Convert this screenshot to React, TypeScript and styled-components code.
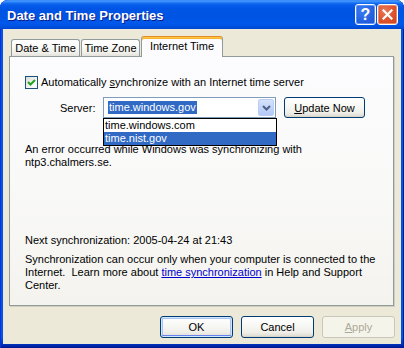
import React from "react";
import styled, { createGlobalStyle } from "styled-components";

const GlobalStyle = createGlobalStyle`
  html, body { margin: 0; padding: 0; background: #ffffff; }
  body { font-family: "Liberation Sans", Arial, sans-serif; font-size: 11px; color: #000; }
  * { box-sizing: border-box; }
`;

const Window = styled.div`
  width: 404px;
  height: 348px;
  display: flex;
  flex-direction: column;
  border-radius: 8px 8px 0 0;
  overflow: hidden;
  background: linear-gradient(180deg, #0055e5 0%, #0055e5 97%, #0030b8 99%, #00138c 100%);
  box-shadow: inset 1px 0 #0831d9, inset -1px 0 #001ea0;
`;

const TitleBar = styled.div`
  height: 29px;
  flex: none;
  display: flex;
  align-items: center;
  padding: 0 6px 0 7px;
  gap: 1px;
  background: linear-gradient(
    180deg,
    #2a7ff6 0px,
    #4b9cff 1px,
    #2c84f8 2px,
    #0b62ec 4px,
    #0055e5 8px,
    #0054e3 60%,
    #0058eb 80%,
    #0050df 92%,
    #0045d0 100%
  );
`;

const Title = styled.div`
  flex: 1;
  color: #ffffff;
  font-family: "Liberation Sans", Arial, sans-serif;
  font-weight: bold;
  font-size: 13px;
  text-shadow: 1px 1px #0a1a8a;
  margin-top: 1px;
`;

const CaptionButton = styled.div<{ $kind: "help" | "close" }>`
  width: 21px;
  height: 21px;
  border: 1px solid #ffffff;
  border-radius: 3px;
  display: flex;
  align-items: center;
  justify-content: center;
  color: #ffffff;
  font-weight: bold;
  font-size: 16px;
  background: ${(p) =>
    p.$kind === "help"
      ? "radial-gradient(circle at 35% 30%, #3b7cf5 0%, #2663e0 55%, #1a4fd6 100%)"
      : "radial-gradient(circle at 35% 30%, #e87a57 0%, #e0532f 50%, #c7401b 100%)"};
  box-shadow: inset 0 0 0 1px ${(p) => (p.$kind === "help" ? "#5e93f5" : "#ee8a66")};
`;

const Body = styled.div`
  flex: 1;
  margin: 0 3px 4px 3px;
  background: #ece9d8;
  padding: 7px 7px 6px 6px;
  display: flex;
  flex-direction: column;
`;

const TabStrip = styled.div`
  height: 20px;
  flex: none;
  display: flex;
  align-items: flex-end;
  padding-left: 2px;
  position: relative;
  z-index: 1;
`;

const Tab = styled.div<{ $active?: boolean; $w: number }>`
  width: ${(p) => p.$w}px;
  height: ${(p) => (p.$active ? 21 : 17)}px;
  margin-bottom: ${(p) => (p.$active ? -1 : 0)}px;
  margin-right: ${(p) => (p.$active ? 0 : 1)}px;
  border: 1px solid #919b9c;
  border-bottom: none;
  border-top: 1px solid ${(p) => (p.$active ? "#e68b2c" : "#919b9c")};
  border-radius: 3px 3px 0 0;
  display: flex;
  justify-content: center;
  align-items: ${(p) => (p.$active ? "flex-start" : "center")};
  padding-top: ${(p) => (p.$active ? 3 : 0)}px;
  font-size: 11px;
  white-space: nowrap;
  background: ${(p) =>
    p.$active
      ? "#fcfcfe"
      : "linear-gradient(180deg, #ffffff 0%, #fafaf9 40%, #f0efea 80%, #e3e2dc 100%)"};
  box-shadow: ${(p) =>
    p.$active ? "inset 0 1px #ffc73c, inset 0 2px #f8b334" : "none"};
`;

const Panel = styled.div`
  flex: none;
  height: 250px;
  border: 1px solid #919b9c;
  background: linear-gradient(180deg, #fcfcfe 0%, #f9f9f8 50%, #f4f3ee 100%);
  box-shadow: 1px 1px 0 #d0cebf;
  padding: 19px 15px 0 15px;
  display: flex;
  flex-direction: column;
  position: relative;
`;

const CheckRow = styled.div`
  display: flex;
  align-items: center;
  gap: 3px;
  height: 13px;
  line-height: 13px;
`;

const CheckBox = styled.div`
  width: 13px;
  height: 13px;
  border: 1px solid #1c5180;
  background: linear-gradient(135deg, #dcdcd7 0%, #f5f5f3 60%, #ffffff 100%);
  display: flex;
  align-items: center;
  justify-content: center;
`;

const ServerRow = styled.div`
  display: flex;
  align-items: center;
  height: 21px;
  margin-top: 8px;
  padding-left: 35px;
`;

const Label = styled.div`
  width: 43px;
`;

const ComboWrap = styled.div`
  position: relative;
  width: 173px;
  height: 21px;
`;

const Combo = styled.div`
  width: 100%;
  height: 100%;
  border: 1px solid #7f9db9;
  background: #ffffff;
  display: flex;
  align-items: center;
  padding: 0 1px 0 4px;
  font-size: 11px;
`;

const Selected = styled.span`
  background: #316ac5;
  color: #ffffff;
  padding: 0 1px;
  line-height: 13px;
  flex: none;
`;

const Spacer = styled.div`
  flex: 1;
`;

const DropButton = styled.div`
  width: 16px;
  height: 17px;
  border: 1px solid #b9cdf6;
  border-radius: 2px;
  background: linear-gradient(180deg, #d7e3fd 0%, #c3d4fb 50%, #b5c9f8 100%);
  display: flex;
  align-items: center;
  justify-content: center;
`;

const DropList = styled.div`
  position: absolute;
  left: 0;
  top: 100%;
  width: 174px;
  border: 1px solid #000000;
  background: #ffffff;
  font-size: 11px;
  z-index: 2;
`;

const DropItem = styled.div<{ $hl?: boolean }>`
  height: 13px;
  line-height: 13px;
  padding-left: 1px;
  background: ${(p) => (p.$hl ? "#316ac5" : "transparent")};
  color: ${(p) => (p.$hl ? "#ffffff" : "#000000")};
`;

const Button = styled.div<{ $w: number; $default?: boolean; $disabled?: boolean }>`
  width: ${(p) => p.$w}px;
  height: 22px;
  border: 1px solid ${(p) => (p.$disabled ? "#c9c7ba" : "#003c74")};
  border-radius: 3px;
  display: flex;
  align-items: center;
  justify-content: center;
  font-size: 11px;
  color: ${(p) => (p.$disabled ? "#aca899" : "#000000")};
  background: ${(p) =>
    p.$disabled
      ? "#f5f4ea"
      : "linear-gradient(180deg, #ffffff 0%, #f8f8f5 40%, #f0efea 75%, #e5e3da 90%, #d6d0c5 100%)"};
  box-shadow: ${(p) =>
    p.$default
      ? "inset 0 0 0 1px #cee7ff, inset 0 -2px #6982ee, inset 0 0 0 2px #a9c4f4"
      : "none"};
`;

const UpdateButton = styled(Button)`
  margin-left: 8px;
  height: 21px;
`;

const Text = styled.div<{ $mt: number }>`
  margin-top: ${(p) => p.$mt}px;
  line-height: 13px;
`;

const Link = styled.span`
  color: #0000cc;
  text-decoration: underline;
`;

const ButtonRow = styled.div`
  display: flex;
  justify-content: flex-end;
  gap: 8px;
  margin-top: 10px;
  margin-right: -1px;
`;

export default function App() {
  return (
    <>
      <GlobalStyle />
      <Window>
        <TitleBar>
          <Title>Date and Time Properties</Title>
          <CaptionButton $kind="help">?</CaptionButton>
          <CaptionButton $kind="close">
            <svg width="11" height="11" viewBox="0 0 11 11">
              <path d="M1.5 1.5 L9.5 9.5 M9.5 1.5 L1.5 9.5" stroke="#ffffff" strokeWidth="2.2" strokeLinecap="square" />
            </svg>
          </CaptionButton>
        </TitleBar>
        <Body>
          <TabStrip>
            <Tab $w={69}>Date &amp; Time</Tab>
            <Tab $w={59}>Time Zone</Tab>
            <Tab $w={82} $active>Internet Time</Tab>
          </TabStrip>
          <Panel>
            <CheckRow>
              <CheckBox>
                <svg width="9" height="9" viewBox="0 0 9 9">
                  <path d="M1 4 L3.5 6.5 L8 2" stroke="#21a121" strokeWidth="2" fill="none" />
                </svg>
              </CheckBox>
              <span>
                Automatically <u>s</u>ynchronize with an Internet time server
              </span>
            </CheckRow>
            <ServerRow>
              <Label>Server:</Label>
              <ComboWrap>
                <Combo>
                  <Selected>time.windows.gov</Selected>
                  <Spacer />
                  <DropButton>
                    <svg width="9" height="6" viewBox="0 0 9 6">
                      <path d="M1 1 L4.5 4.5 L8 1" stroke="#4d6185" strokeWidth="2" fill="none" />
                    </svg>
                  </DropButton>
                </Combo>
                <DropList>
                  <DropItem>time.windows.com</DropItem>
                  <DropItem $hl>time.nist.gov</DropItem>
                </DropList>
              </ComboWrap>
              <UpdateButton $w={81}>
                <span>
                  <u>U</u>pdate Now
                </span>
              </UpdateButton>
            </ServerRow>
            <Text $mt={25}>
              An error occurred while Windows was synchronizing with
              <br />
              ntp3.chalmers.se.
            </Text>
            <Text $mt={65}>Next synchronization: 2005-04-24 at 21:43</Text>
            <Text $mt={6}>
              Synchronization can occur only when your computer is connected to the
              <br />
              Internet.&nbsp; Learn more about <Link>time synchronization</Link> in Help and Support
              <br />
              Center.
            </Text>
          </Panel>
          <ButtonRow>
            <Button $w={73} $default>OK</Button>
            <Button $w={73}>Cancel</Button>
            <Button $w={73} $disabled>
              <span>
                <u>A</u>pply
              </span>
            </Button>
          </ButtonRow>
        </Body>
      </Window>
    </>
  );
}
